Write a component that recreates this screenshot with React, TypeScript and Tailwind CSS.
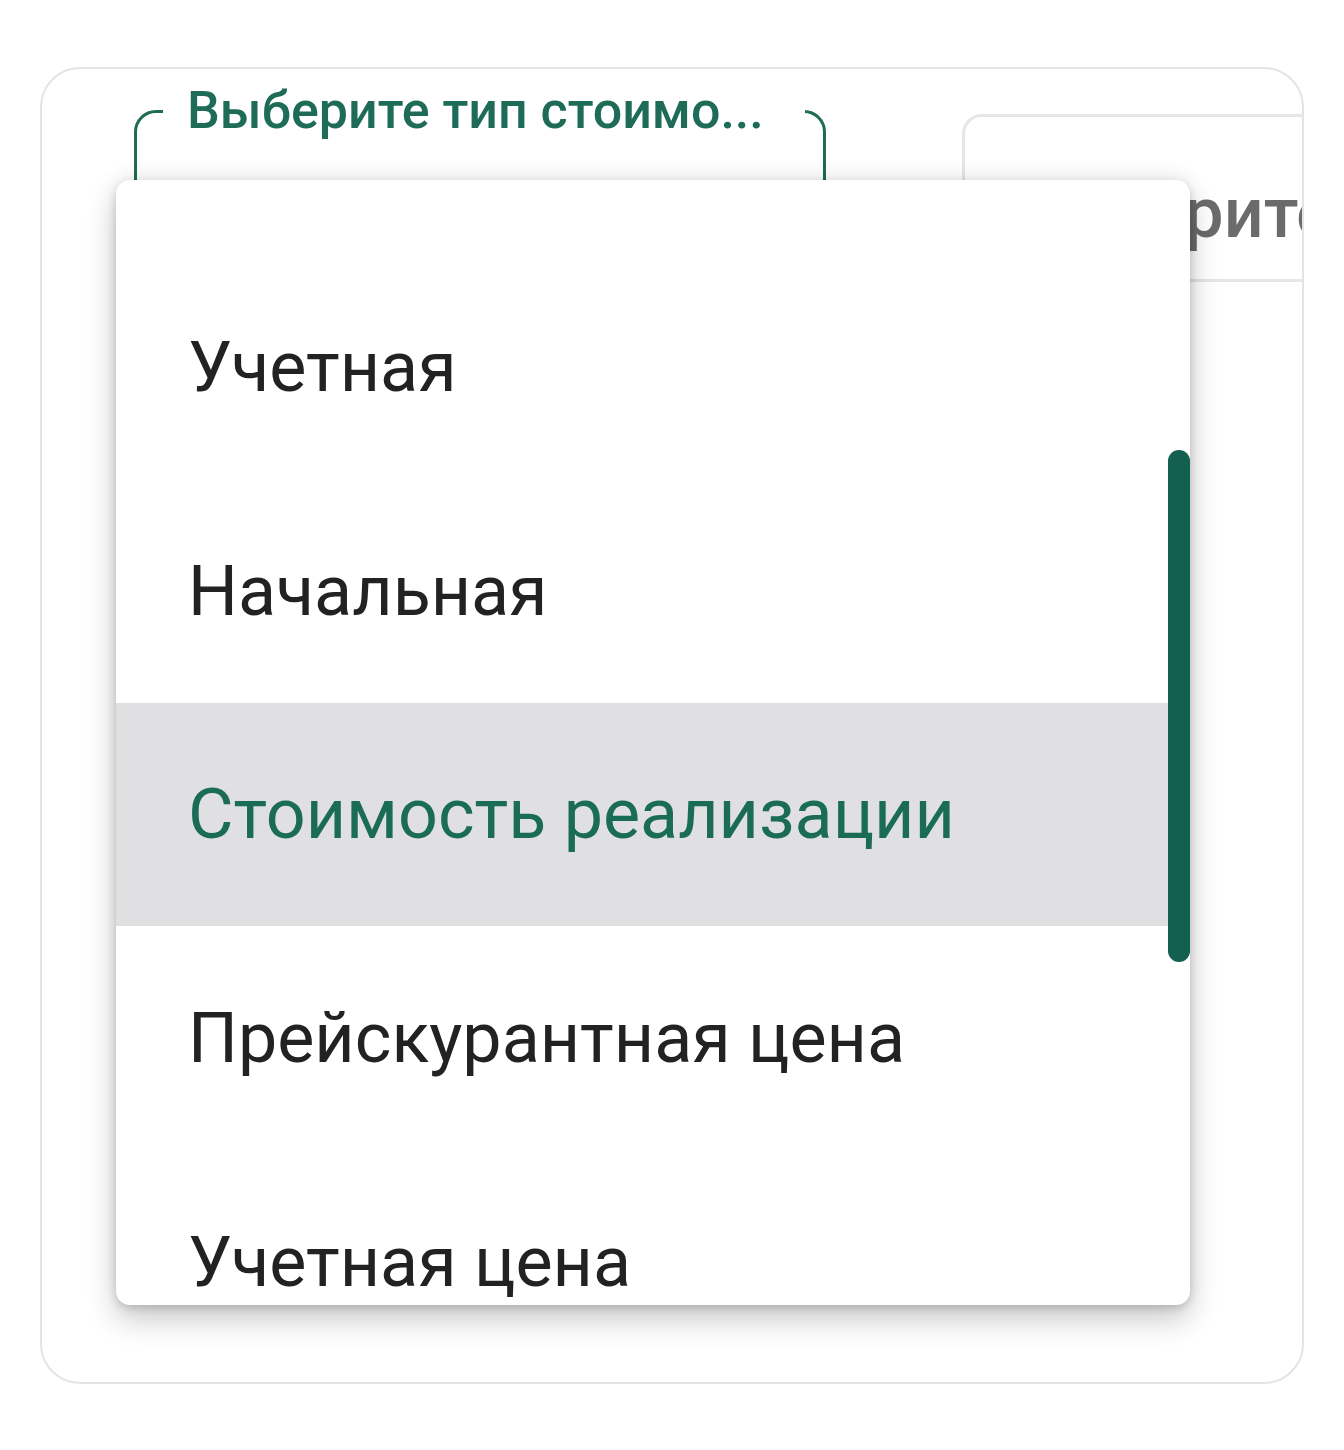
const options = [
  "Учетная",
  "Начальная",
  "Стоимость реализации",
  "Прейскурантная цена",
  "Учетная цена",
];

const selected = "Стоимость реализации";

export default function App() {
  return (
    <div className="min-h-[1450px] bg-white pl-[40px] pt-[67px] font-['Roboto',sans-serif]">
      <div className="relative h-[1317px] w-[1264px] overflow-hidden rounded-[40px] border-2 border-[#e4e4e4] bg-white">
        {/* fields row */}
        <div className="flex items-start gap-[136px] pl-[92px] pt-[16px]">
          <fieldset className="h-[192px] w-[692px] min-w-0 shrink-0 rounded-[22px] border-[3px] border-[#1e6b57] pl-[26px] pr-[8px]">
            <legend className="w-[642px] pl-[24px] text-[52px] font-medium leading-[52px] text-[#1e6b57]">
              Выберите тип стоимо...
            </legend>
          </fieldset>
          <div className="mt-[29px] h-[168px] w-[600px] shrink-0 rounded-[20px] border-[3px] border-[#e6e6e6] pl-[42px] pt-[61px]">
            <span className="block whitespace-nowrap text-[70px] font-medium leading-[70px] text-[#6b6b6b]">Выберите тип</span>
          </div>
        </div>

        {/* dropdown menu */}
        <div className="absolute left-[74px] top-[111px] flex h-[1125px] w-[1074px] overflow-hidden rounded-[14px] bg-white shadow-[0_14px_30px_rgba(0,0,0,0.22),0_3px_8px_rgba(0,0,0,0.14),0_-6px_20px_rgba(0,0,0,0.05)]">
          <ul className="flex-1 pt-[75px]">
            {options.map((o) => (
              <li
                key={o}
                className={
                  o === selected
                    ? "flex h-[223px] items-center bg-[#e0dfe2] pl-[72px] text-[70px] text-[#1b6c57]"
                    : "flex h-[224px] items-center pl-[72px] text-[70px] text-[#222222]"
                }
              >
                {o}
              </li>
            ))}
          </ul>
          <div className="w-[22px] shrink-0">
            <div className="mt-[270px] h-[512px] w-[22px] rounded-full bg-[#135f50]" />
          </div>
        </div>
      </div>
    </div>
  );
}
